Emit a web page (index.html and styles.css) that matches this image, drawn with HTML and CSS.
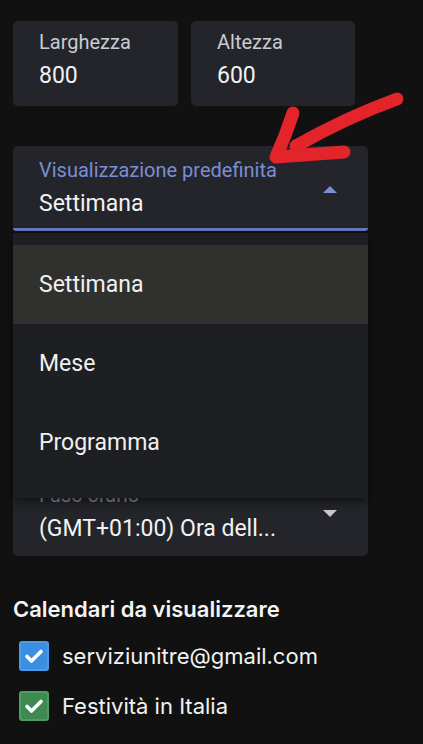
FILE: index.html
```html
<!DOCTYPE html>
<html lang="it">
  <head>
    <meta charset="utf-8">
    <title>Impostazioni calendario</title>
    <link rel="stylesheet" href="styles.css">
  </head>
  <body>
    <div class="page">
      <div class="dims">
        <div class="field field-w">
          <div class="field-label">Larghezza</div>
          <div class="field-value">800</div>
        </div>
        <div class="field field-h">
          <div class="field-label">Altezza</div>
          <div class="field-value">600</div>
        </div>
      </div>

      <div class="select-wrap">
        <div class="select select-open">
          <div class="select-text">
            <div class="field-label label-active">Visualizzazione predefinita</div>
            <div class="field-value">Settimana</div>
          </div>
          <span class="caret caret-up"></span>
        </div>

        <ul class="menu">
          <li class="menu-item menu-item-selected">Settimana</li>
          <li class="menu-item">Mese</li>
          <li class="menu-item">Programma</li>
        </ul>
      </div>

      <div class="select select-tz">
        <div class="select-text">
          <div class="field-label label-muted">Fuso orario</div>
          <div class="field-value">(GMT+01:00) Ora dell...</div>
        </div>
        <span class="caret caret-down"></span>
      </div>

      <h3 class="section-title">Calendari da visualizzare</h3>
      <div class="cal-row">
        <span class="check check-blue">
          <svg viewBox="0 0 24 24" width="24" height="24"><path d="M5 12.5l4.5 4.5L19 7.5" fill="none" stroke="#fff" stroke-width="3.6" stroke-linecap="round" stroke-linejoin="round"/></svg>
        </span>
        <span class="cal-name">serviziunitre@gmail.com</span>
      </div>
      <div class="cal-row">
        <span class="check check-green">
          <svg viewBox="0 0 24 24" width="24" height="24"><path d="M5 12.5l4.5 4.5L19 7.5" fill="none" stroke="#fff" stroke-width="3.6" stroke-linecap="round" stroke-linejoin="round"/></svg>
        </span>
        <span class="cal-name">Festività in Italia</span>
      </div>

      <!-- annotation drawn on top of the screenshot -->
      <svg class="arrow" viewBox="0 0 150 80" width="150" height="80">
        <path d="M137,9 Q85,28 36,56" fill="none" stroke="#e3242a" stroke-width="13" stroke-linecap="round"/>
        <path d="M33,23 Q26,45 16,67 L84,62" fill="none" stroke="#e3242a" stroke-width="13" stroke-linecap="round" stroke-linejoin="round"/>
      </svg>
    </div>
  </body>
</html>
```

FILE: styles.css
```css
body{
  margin: 0;
  background-color: #111111;
  font-family: Roboto, "Liberation Sans", sans-serif;
  color: #e8e8e8;
}
.page{
  position: relative;
  padding: 21px 13px 20px 13px;
  height: 703px;
  overflow: hidden;
}

.dims{
  display: flex;
  gap: 13px;
}
.field{
  background-color: #23252b;
  border-radius: 5px;
  height: 85px;
  box-sizing: border-box;
  padding: 10px 26px 0 26px;
}
.field-w{ width: 165px; }
.field-h{ width: 164px; }

.field-label{
  font-size: 20px;
  line-height: 22px;
  color: #cbccd0;
}
.field-value{
  font-size: 23px;
  line-height: 30px;
  margin-top: 8px;
  color: #f2f2f2;
}
.label-active{ color: #7b8ed4; }
.label-muted{ color: #8f9094; }

.select-wrap{
  position: relative;
  margin-top: 40px;
  width: 355px;
}
.select{
  display: flex;
  align-items: center;
  justify-content: space-between;
  width: 355px;
  height: 85px;
  box-sizing: border-box;
  background-color: #23252b;
  border-radius: 5px;
  padding: 0 31px 0 26px;
}
.select-open{
  border-bottom: 3px solid #6677bd;
  border-radius: 5px 5px 3px 3px;
}
.select-text{
  padding-top: 3px;
}
.caret{
  width: 0;
  height: 0;
  border-left: 7px solid transparent;
  border-right: 7px solid transparent;
}
.caret-up{
  border-bottom: 7px solid #7b8fd8;
  margin-top: 5px;
}
.caret-down{
  border-top: 7px solid #c8c8cc;
  margin-top: 0;
}

.menu{
  position: absolute;
  top: 87px;
  left: 0;
  width: 355px;
  margin: 0;
  padding: 12px 0 16px 0;
  list-style: none;
  background-color: #1d1f23;
  border-radius: 0 0 4px 4px;
  box-shadow: 0 4px 10px rgba(0,0,0,0.5);
  z-index: 2;
}
.menu-item{
  height: 79px;
  display: flex;
  align-items: center;
  padding-left: 26px;
  font-size: 23px;
  color: #f0f0f0;
}
.menu-item-selected{
  background-color: #30312e;
}

.select-tz{
  margin-top: 240px;
}
.select-tz .select-text{
  padding-top: 0;
}

.section-title{
  margin: 39px 0 0 0;
  font-family: Inter, Roboto, sans-serif;
  font-size: 22px;
  line-height: 28px;
  font-weight: 600;
  color: #f4f4f4;
}
.cal-row{
  display: flex;
  align-items: center;
  gap: 13px;
  margin-top: 18px;
  padding-left: 6px;
  height: 30px;
}
.cal-row + .cal-row{
  margin-top: 20px;
}
.check{
  width: 30px;
  height: 30px;
  box-sizing: border-box;
  border-radius: 3px;
  display: flex;
  align-items: center;
  justify-content: center;
}
.check-blue{
  background-color: #3b8fe0;
  border: 2px solid #4a9be8;
}
.check-green{
  background-color: #3c8a52;
  border: 2px solid #4f9d63;
}
.cal-name{
  font-family: Inter, Roboto, sans-serif;
  font-size: 22px;
  color: #f2f2f2;
}

.arrow{
  position: absolute;
  left: 260px;
  top: 90px;
  z-index: 3;
}
```
